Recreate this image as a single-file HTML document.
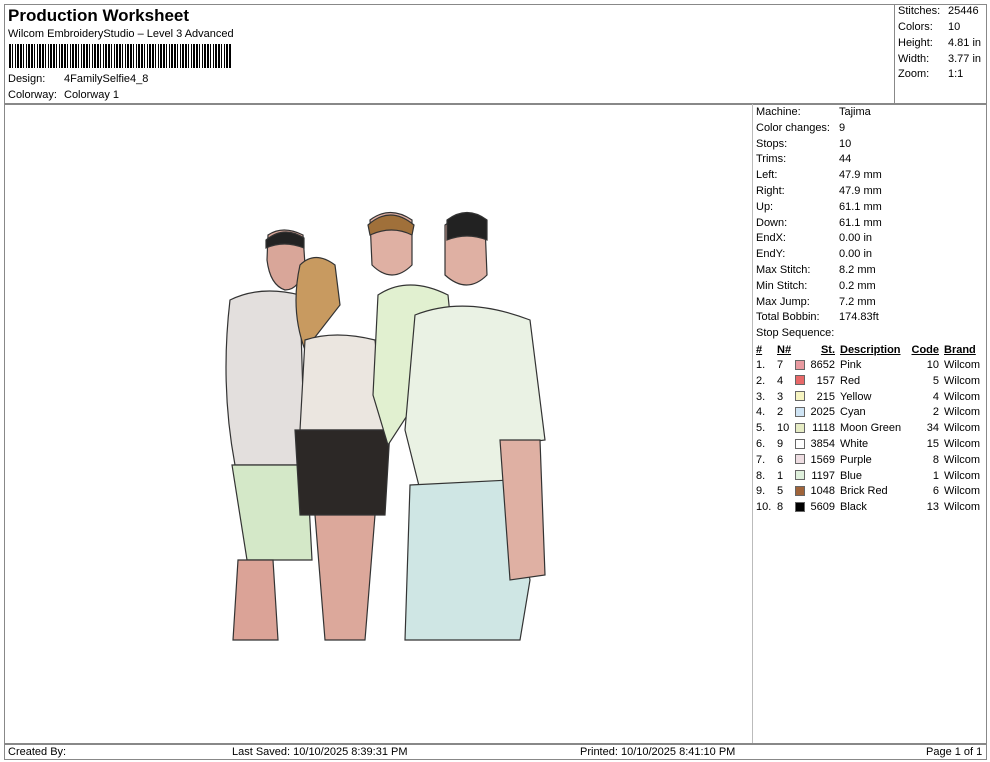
<!DOCTYPE html>
<html><head><style>
*{margin:0;padding:0;box-sizing:border-box}
body{width:990px;height:762px;background:#fff;font-family:"Liberation Sans",Arial,sans-serif;font-size:11px;color:#000;position:relative;overflow:hidden}
.a{position:absolute;white-space:nowrap;line-height:13px}
.l{position:absolute;background:#888}
.sw{position:absolute;width:10px;height:10px;border:1px solid #666}
</style></head><body>
<div class="l" style="left:4px;top:4px;width:983px;height:1px"></div>
<div class="l" style="left:4px;top:4px;width:1px;height:756px"></div>
<div class="l" style="left:986px;top:4px;width:1px;height:756px"></div>
<div class="l" style="left:4px;top:759px;width:983px;height:1px"></div>
<div class="l" style="left:4px;top:103px;width:983px;height:2px"></div>
<div class="l" style="left:894px;top:4px;width:1px;height:99px"></div>
<div class="l" style="left:752px;top:104px;width:1px;height:640px;background:#bbb"></div>
<div class="l" style="left:4px;top:743px;width:983px;height:2px"></div>

<div class="a" style="left:8px;top:6px;font-size:17px;font-weight:bold;line-height:20px">Production Worksheet</div>
<div class="a" style="left:8px;top:28px">Wilcom EmbroideryStudio – Level 3 Advanced</div>
<div class="a" style="left:9px;top:44px;width:222px;height:24px;background:repeating-linear-gradient(90deg,#000 0 2px,#fff 2px 3px,#000 3px 4px,#fff 4px 6px,#000 6px 7px,#fff 7px 8px,#000 8px 10px,#fff 10px 11px)"></div>
<div class="a" style="left:8px;top:73px">Design:</div><div class="a" style="left:64px;top:73px">4FamilySelfie4_8</div>
<div class="a" style="left:8px;top:89px">Colorway:</div><div class="a" style="left:64px;top:89px">Colorway 1</div>

<div class="a" style="left:898px;top:5px">Stitches:</div><div class="a" style="left:948px;top:5px">25446</div>
<div class="a" style="left:898px;top:21px">Colors:</div><div class="a" style="left:948px;top:21px">10</div>
<div class="a" style="left:898px;top:37px">Height:</div><div class="a" style="left:948px;top:37px">4.81 in</div>
<div class="a" style="left:898px;top:53px">Width:</div><div class="a" style="left:948px;top:53px">3.77 in</div>
<div class="a" style="left:898px;top:68px">Zoom:</div><div class="a" style="left:948px;top:68px">1:1</div>

<div class="a" style="left:756px;top:105px;line-height:15.8px">Machine:<br>Color changes:<br>Stops:<br>Trims:<br>Left:<br>Right:<br>Up:<br>Down:<br>EndX:<br>EndY:<br>Max Stitch:<br>Min Stitch:<br>Max Jump:<br>Total Bobbin:<br>Stop Sequence:</div>
<div class="a" style="left:839px;top:105px;line-height:15.8px">Tajima<br>9<br>10<br>44<br>47.9 mm<br>47.9 mm<br>61.1 mm<br>61.1 mm<br>0.00 in<br>0.00 in<br>8.2 mm<br>0.2 mm<br>7.2 mm<br>174.83ft</div>

<div class="a" style="left:756px;top:343px;line-height:15.8px;font-weight:bold;text-decoration:underline">#</div>
<div class="a" style="left:777px;top:343px;line-height:15.8px;font-weight:bold;text-decoration:underline">N#</div>
<div class="a" style="left:806px;width:29px;text-align:right;top:343px;line-height:15.8px;font-weight:bold;text-decoration:underline">St.</div>
<div class="a" style="left:840px;top:343px;line-height:15.8px;font-weight:bold;text-decoration:underline">Description</div>
<div class="a" style="left:908px;width:31px;text-align:right;top:343px;line-height:15.8px;font-weight:bold;text-decoration:underline">Code</div>
<div class="a" style="left:944px;top:343px;line-height:15.8px;font-weight:bold;text-decoration:underline">Brand</div>
<div class="a" style="left:756px;top:358px;line-height:15.8px">1.<br>2.<br>3.<br>4.<br>5.<br>6.<br>7.<br>8.<br>9.<br>10.</div>
<div class="a" style="left:777px;top:358px;line-height:15.8px">7<br>4<br>3<br>2<br>10<br>9<br>6<br>1<br>5<br>8</div>
<div class="a" style="left:796px;width:39px;text-align:right;top:358px;line-height:15.8px">8652<br>157<br>215<br>2025<br>1118<br>3854<br>1569<br>1197<br>1048<br>5609</div>
<div class="a" style="left:840px;top:358px;line-height:15.8px">Pink<br>Red<br>Yellow<br>Cyan<br>Moon Green<br>White<br>Purple<br>Blue<br>Brick Red<br>Black</div>
<div class="a" style="left:908px;width:31px;text-align:right;top:358px;line-height:15.8px">10<br>5<br>4<br>2<br>34<br>15<br>8<br>1<br>6<br>13</div>
<div class="a" style="left:944px;top:358px;line-height:15.8px">Wilcom<br>Wilcom<br>Wilcom<br>Wilcom<br>Wilcom<br>Wilcom<br>Wilcom<br>Wilcom<br>Wilcom<br>Wilcom</div>
<div class="sw" style="left:795px;top:360px;background:#e89aa0"></div>
<div class="sw" style="left:795px;top:375px;background:#e86868"></div>
<div class="sw" style="left:795px;top:391px;background:#f6f4c0"></div>
<div class="sw" style="left:795px;top:407px;background:#cfe4f4"></div>
<div class="sw" style="left:795px;top:423px;background:#e6ecc4"></div>
<div class="sw" style="left:795px;top:439px;background:#fff"></div>
<div class="sw" style="left:795px;top:454px;background:#eedde2"></div>
<div class="sw" style="left:795px;top:470px;background:#dff0dc"></div>
<div class="sw" style="left:795px;top:486px;background:#a0643a"></div>
<div class="sw" style="left:795px;top:502px;background:#000"></div>

<div class="a" style="left:8px;top:746px">Created By:</div>
<div class="a" style="left:232px;top:746px">Last Saved: 10/10/2025 8:39:31 PM</div>
<div class="a" style="left:580px;top:746px">Printed: 10/10/2025 8:41:10 PM</div>
<div class="a" style="left:926px;top:746px">Page 1 of 1</div>

<svg style="position:absolute;left:200px;top:200px" width="360" height="450" viewBox="200 200 360 450">
<g stroke="#333" stroke-width="1.2">
<path d="M268 235 q15-10 35 0 l2 30 q-5 25-20 25 q-15-5-18-30z" fill="#d9a699"/>
<path d="M266 240 q18-15 38-2 l0 10 q-20-8-38 0z" fill="#222"/>
<path d="M230 300 q30-15 70-5 l5 170 l-70 0 q-15-80-5-165z" fill="#e3dfdd"/>
<path d="M232 465 l75 0 l5 95 l-65 0z" fill="#d4e8c8"/>
<path d="M238 560 l35 0 l5 80 l-45 0z" fill="#dba397"/>
<path d="M300 265 q15-15 35 0 l5 40 l-35 45 q-15-40-5-85z" fill="#c89a60"/>
<path d="M305 340 q30-10 70 0 l10 90 l-85 0z" fill="#ebe6e0"/>
<path d="M295 430 l95 0 l-5 85 l-85 0z" fill="#2c2826"/>
<path d="M315 515 l60 0 l-10 125 l-40 0z" fill="#dca89b"/>
<path d="M370 220 q20-15 42 0 l0 45 q-20 20-40 0z" fill="#dfb0a3"/>
<path d="M368 225 q22-20 46 0 l-2 10 q-20-10-42 0z" fill="#a0703a"/>
<path d="M378 295 q30-20 70 0 l5 50 l-65 100 l-15-50z" fill="#e1f0d0"/>
<path d="M445 225 q20-15 40 0 l2 50 q-20 20-42 0z" fill="#dfb0a3"/>
<path d="M447 220 q20-15 40 0 l0 20 q-20-8-40 0z" fill="#222"/>
<path d="M415 315 q50-20 115 5 l15 120 l-40 5 l0 40 l-85 5 l-15-60z" fill="#eaf2e4"/>
<path d="M410 485 l100 -5 l20 100 l-10 60 l-115 0z" fill="#cfe6e4"/>
<path d="M500 440 l40 0 l5 135 l-35 5z" fill="#dfb0a3"/>
</g>
</svg>
</body></html>
